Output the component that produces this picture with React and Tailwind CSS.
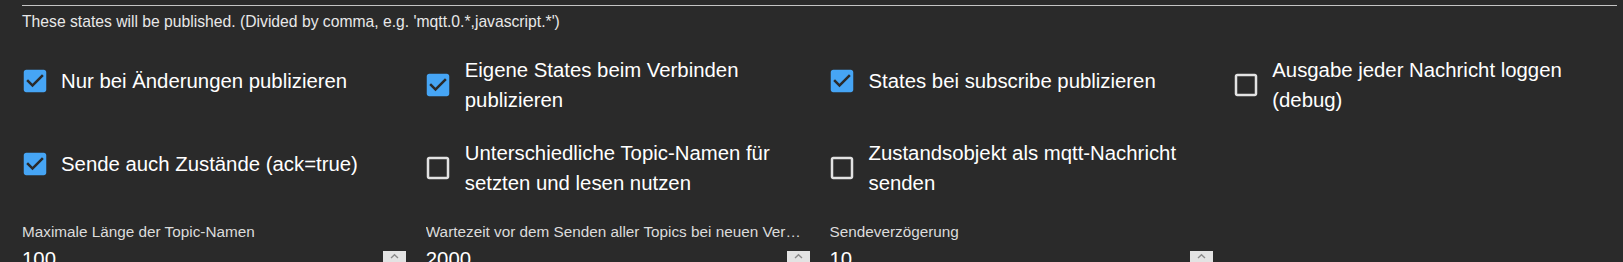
import React from "react";

const CHECKED =
  "M19 3H5c-1.11 0-2 .9-2 2v14c0 1.1.89 2 2 2h14c1.11 0 2-.9 2-2V5c0-1.1-.89-2-2-2zm-9 14l-5-5 1.41-1.41L10 14.17l7.59-7.59L19 8l-9 9z";
const UNCHECKED =
  "M19 5v14H5V5h14m0-2H5c-1.1 0-2 .9-2 2v14c0 1.1.9 2 2 2h14c1.1 0 2-.9 2-2V5c0-1.1-.9-2-2-2z";

function Check({ checked, label }) {
  return (
    <label className="flex min-h-[52.5px] items-center">
      <svg
        viewBox="0 0 24 24"
        className="-ml-[2.5px] h-[30px] w-[30px] shrink-0"
        aria-hidden="true"
      >
        <path d={checked ? CHECKED : UNCHECKED} fill={checked ? "#46a5f5" : "#e2e2e2"} />
      </svg>
      <span className="ml-[11.5px] text-[20.35px] leading-[30px] text-white">{label}</span>
    </label>
  );
}

function NumberField({ label, value }) {
  return (
    <div className="flex flex-col">
      <div className="w-[378px] truncate text-[15.3px] leading-[20px] text-[#dcdcdc]">{label}</div>
      <div className="mt-[2.4px] flex h-[30px] items-start justify-between">
        <span className="text-[20.35px] leading-[30px] text-white">{value}</span>
        <div className="mt-[6.8px] flex h-[24px] w-[23px] justify-center bg-[#e3e3e3]">
          <svg viewBox="0 0 23 12" className="h-[12px] w-[23px]" aria-hidden="true">
            <polyline
              points="8,7 11.5,3.8 15,7"
              fill="none"
              stroke="#8a8a8a"
              strokeWidth="1.4"
            />
          </svg>
        </div>
      </div>
    </div>
  );
}

export default function App() {
  return (
    <div className="min-h-screen w-full overflow-hidden bg-[#2a2a2a] font-[family-name:'Liberation_Sans',Arial,sans-serif]">
      <div className="ml-[22px] w-[1595px] pt-[5px]">
        <div className="h-px bg-[#c4c4c4]" />
        <p className="mt-[6px] text-[15.7px] leading-[20px] text-[#e8e8e8]">
          These states will be published. (Divided by comma, e.g. 'mqtt.0.*,javascript.*')
        </p>
        <div className="mt-[22.5px] grid grid-cols-4 items-start gap-x-[20px] gap-y-[23.5px]">
          <Check checked label="Nur bei Änderungen publizieren" />
          <Check checked label="Eigene States beim Verbinden publizieren" />
          <Check checked label="States bei subscribe publizieren" />
          <Check checked={false} label="Ausgabe jeder Nachricht loggen (debug)" />

          <Check checked label="Sende auch Zustände (ack=true)" />
          <Check checked={false} label="Unterschiedliche Topic-Namen für setzten und lesen nutzen" />
          <Check checked={false} label="Zustandsobjekt als mqtt-Nachricht senden" />
          <div />

          <NumberField label="Maximale Länge der Topic-Namen" value="100" />
          <NumberField
            label="Wartezeit vor dem Senden aller Topics bei neuen Verbindungen (ms)"
            value="2000"
          />
          <NumberField label="Sendeverzögerung" value="10" />
          <div />
        </div>
      </div>
    </div>
  );
}
